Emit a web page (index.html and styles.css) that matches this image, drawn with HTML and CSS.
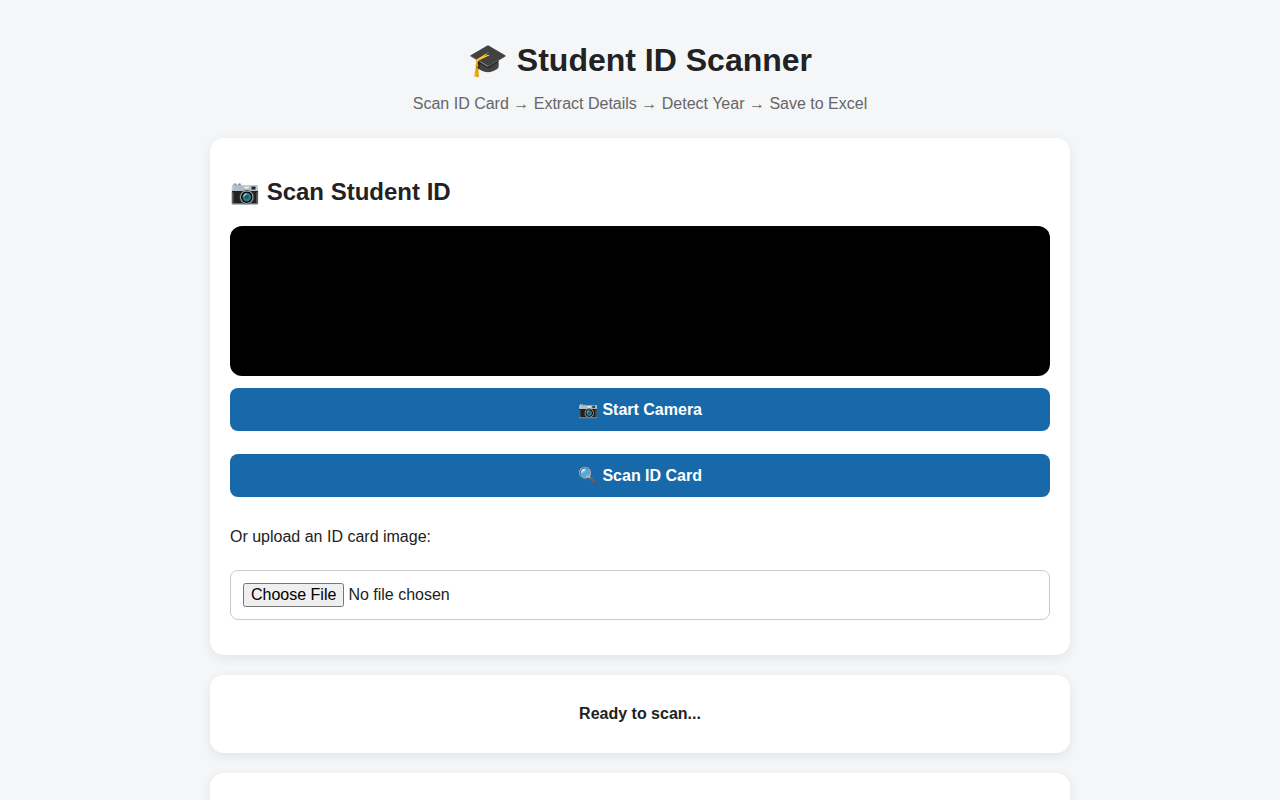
FILE: index.html
```html
<!DOCTYPE html>
<html lang="en">
<head>
  <meta charset="UTF-8">
  <meta name="viewport" content="width=device-width, initial-scale=1.0">
  <title>Student ID Scanner</title>
  <link rel="stylesheet" href="styles.css">
</head>
<body>

  <div class="container">
    <h1>🎓 Student ID Scanner</h1>
    <p class="subtitle">Scan ID Card → Extract Details → Detect Year → Save to Excel</p>

    <div class="card">
      <h2>📷 Scan Student ID</h2>
      <video class="preview" autoplay playsinline></video>
      <button type="button">📷 Start Camera</button>
      <button type="button">🔍 Scan ID Card</button>
      <p><label for="upload">Or upload an ID card image:</label></p>
      <input type="file" id="upload" accept="image/*">
    </div>

    <div class="card">
      <div class="status">Ready to scan...</div>
    </div>

    <div class="card">
      <div class="details"></div>
    </div>
  </div>

</body>
</html>
```

FILE: styles.css
```css
* {
  box-sizing: border-box;
}
body {
  font-family: Arial, "Liberation Sans", sans-serif;
  background: #f4f6f8;
  color: #222;
  margin: 0;
  padding: 20px;
}
.container {
  max-width: 860px;
  margin: 0 auto;
}
h1 {
  text-align: center;
  margin: 21px 0 16px;
}
.subtitle {
  text-align: center;
  color: #666;
  margin: 0 0 25px;
}
.card {
  background: white;
  border-radius: 14px;
  padding: 20px;
  margin-bottom: 20px;
  box-shadow: 0 3px 12px rgba(0, 0, 0, 0.08);
}
.preview {
  width: 100%;
  height: 150px;
  background: black;
  border-radius: 12px;
}
button {
  width: 100%;
  padding: 12px;
  margin: 8px 0 15px;
  border: none;
  border-radius: 8px;
  background: #1769aa;
  color: white;
  font-family: inherit;
  font-size: 16px;
  font-weight: bold;
  cursor: pointer;
}
input[type="file"] {
  width: 100%;
  padding: 12px;
  margin: 8px 0 15px;
  border: 1px solid #ccc;
  border-radius: 8px;
  font-family: inherit;
  font-size: 16px;
}
.status {
  text-align: center;
  font-weight: bold;
  padding: 10px;
}
.details {
  min-height: 60px;
}
```
